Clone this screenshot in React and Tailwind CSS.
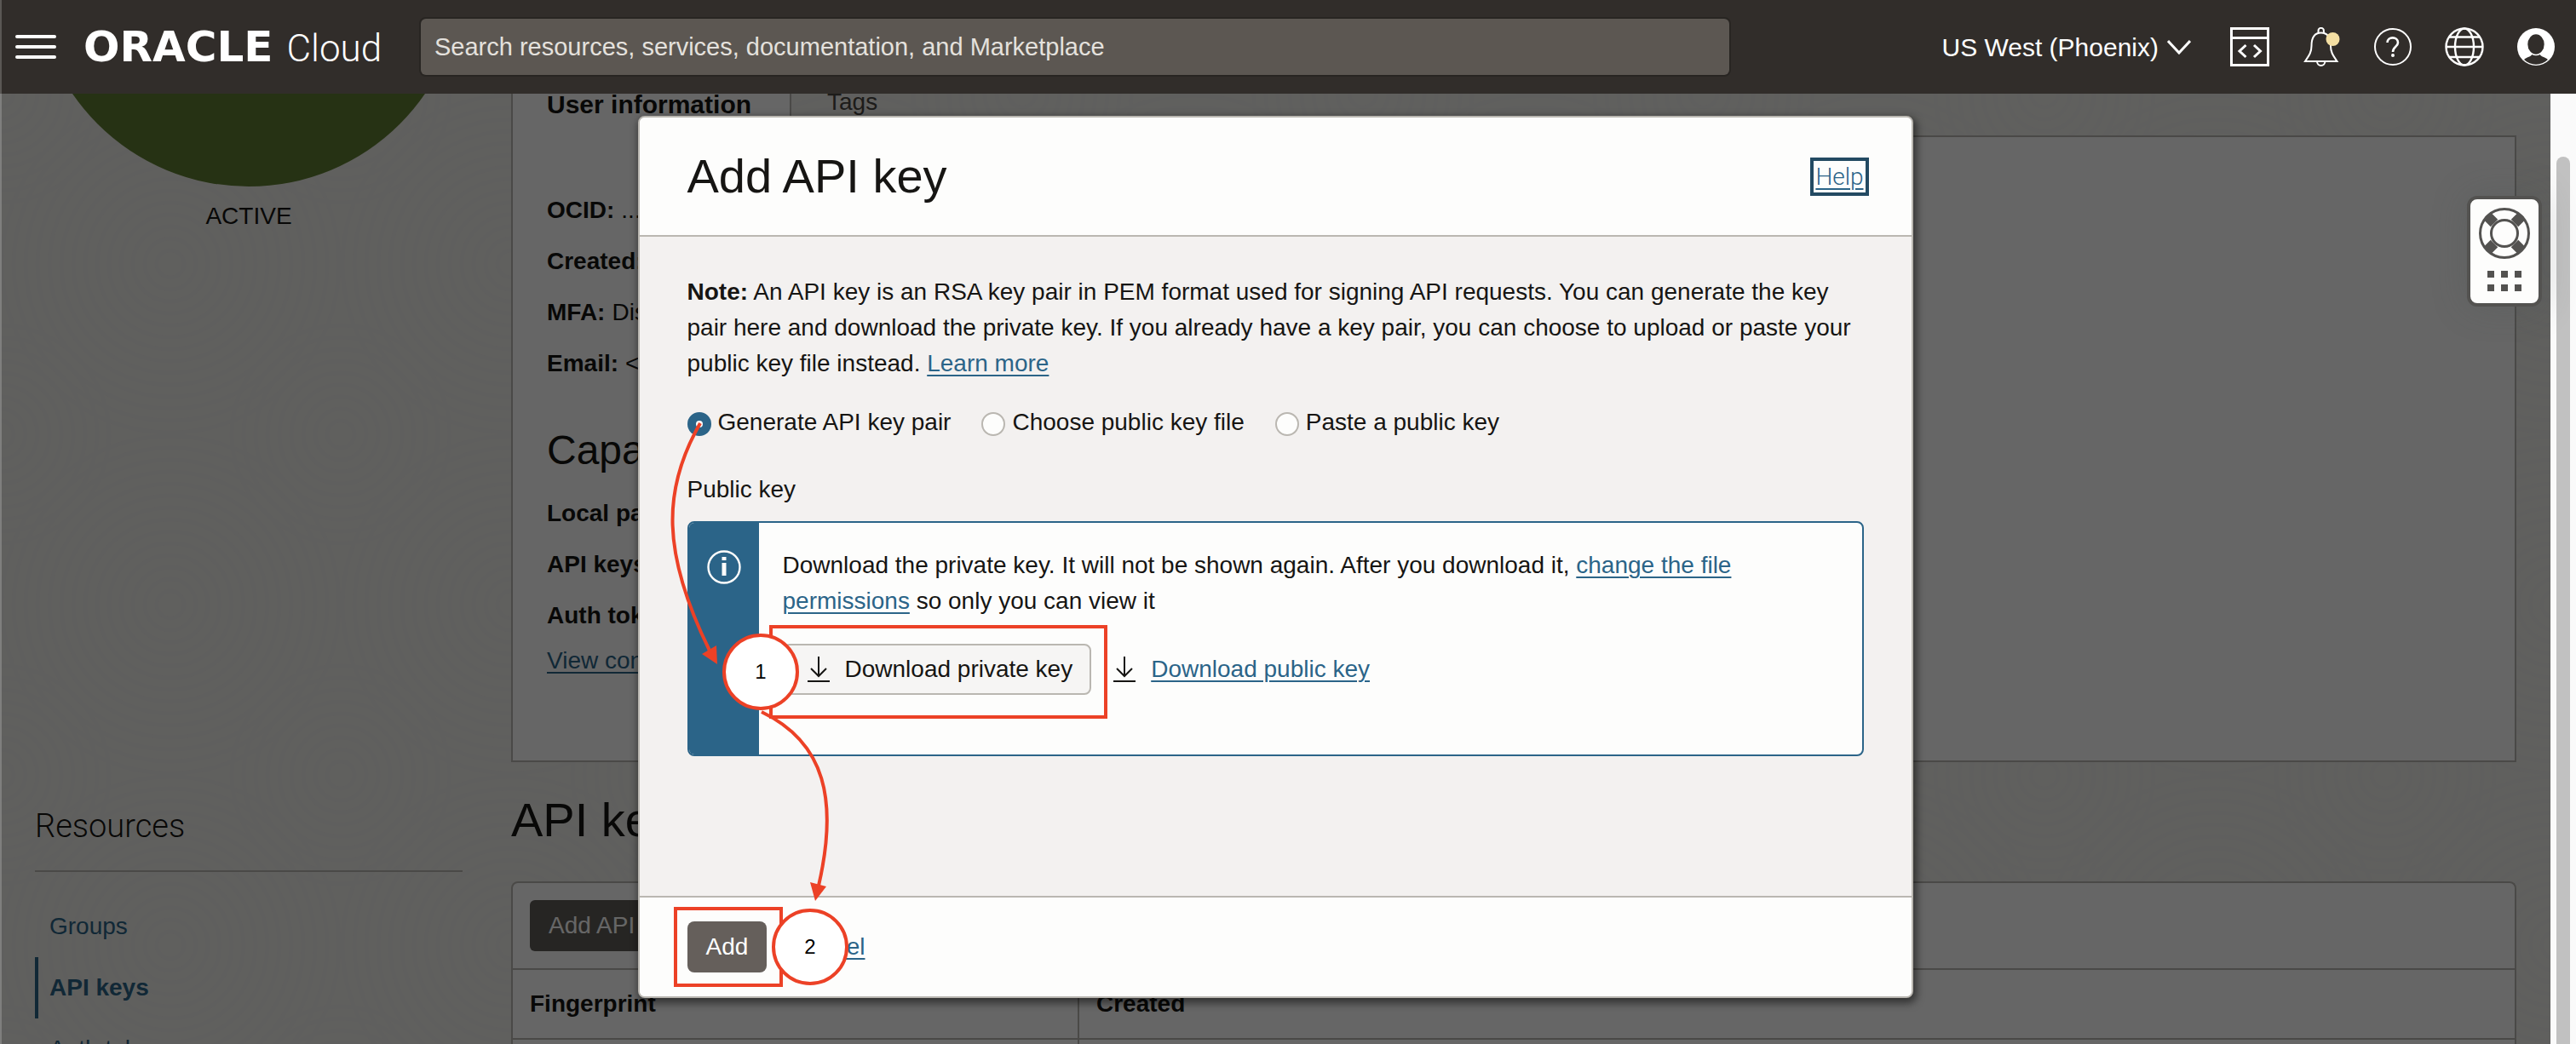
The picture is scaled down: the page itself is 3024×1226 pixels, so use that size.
import React from "react";

const LINK = "text-[#2b6488] underline decoration-2 underline-offset-4";

function Header() {
  return (
    <header className="relative z-30 flex h-[110px] shrink-0 items-center bg-[#312d2a] pr-6 pl-[18px] text-white">
      <button aria-label="Open navigation menu" className="flex w-12 shrink-0 flex-col gap-2">
        <span className="h-1 w-full rounded-full bg-white" />
        <span className="h-1 w-full rounded-full bg-white" />
        <span className="h-1 w-full rounded-full bg-white" />
      </button>
      <a href="#home" className="ml-8 flex w-[396px] shrink-0 items-baseline gap-4 leading-none">
        <span className="font-['DejaVu_Sans',sans-serif] text-[50px] font-bold">ORACLE</span>
        <span className="font-['Roboto',sans-serif] text-[44px] font-light">Cloud</span>
      </a>
      <input
        type="search"
        aria-label="Search"
        placeholder="Search resources, services, documentation, and Marketplace"
        className="h-[66px] w-[1536px] min-w-0 shrink rounded-md bg-[#5c5752] px-4 text-[29px] text-white placeholder-[#e4e1dd] shadow-[0_0_0_2px_#282522] outline-none"
      />
      <div className="ml-auto flex shrink-0 items-center">
        <button className="mr-[46px] flex items-center gap-[10px] text-[30px]">
          US West (Phoenix)
          <svg width="28" height="18" viewBox="0 0 28 18" fill="none" stroke="currentColor" strokeWidth="3">
            <path d="M1 2 L14 16 L27 2" />
          </svg>
        </button>
        <div className="flex items-center gap-[38px]">
          <button aria-label="Developer tools">
            <svg width="46" height="46" viewBox="0 0 46 46" fill="none" stroke="currentColor" strokeWidth="3">
              <rect x="1.5" y="1.5" width="43" height="43" />
              <path d="M1 12.5h44" />
              <path d="M18.5 21 L11 28 L18.5 35 M28 21 L35.500 28 L28 35" />
            </svg>
          </button>
          <button aria-label="Announcements">
            <svg width="46" height="46" viewBox="0 0 46 46" fill="none" stroke="currentColor" strokeWidth="2">
              <path d="M19.500 6.500 V4 a3.200 3.200 0 0 1 6.400 0 V6.500" />
              <path d="M4 40 C8 34 11.500 30 11.500 22 C11.500 12 15.500 6.500 22.700 6.500 C30 6.500 34 12 34 22 C34 30 37.500 34 41.500 40 Z" />
              <path d="M18 40 a4.700 5 0 0 0 9.400 0" />
              <circle cx="36.500" cy="14" r="8" fill="#f4dfa3" stroke="none" />
            </svg>
          </button>
          <button aria-label="Help">
            <svg width="46" height="46" viewBox="0 0 46 46" fill="none" stroke="currentColor" strokeWidth="2">
              <circle cx="23" cy="23" r="21" />
              <path d="M16.500 18 C16.500 10.500 29 10.500 29 18 C29 23 23 22.500 23 29" strokeWidth="2.600" />
              <circle cx="23" cy="33" r="2" fill="currentColor" stroke="none" />
            </svg>
          </button>
          <button aria-label="Language">
            <svg width="46" height="46" viewBox="0 0 46 46" fill="none" stroke="currentColor" strokeWidth="2.400">
              <circle cx="23" cy="23" r="21.500" />
              <ellipse cx="23" cy="23" rx="11" ry="21.500" />
              <path d="M1.500 23h43 M5 11.500h36 M5 35h36" />
            </svg>
          </button>
          <button aria-label="Profile">
            <svg width="46" height="46" viewBox="0 0 46 46">
              <circle cx="23" cy="23" r="22" fill="#ffffff" />
              <path d="M9 38 C13 34.500 17 35 18.500 31.500 H27.500 C29 35 33 34.500 37 38 C29 45.500 17 45.500 9 38 Z" fill="#312d2a" />
              <ellipse cx="23" cy="20" rx="10.500" ry="12.500" fill="#312d2a" stroke="#ffffff" strokeWidth="1.600" />
            </svg>
          </button>
        </div>
      </div>
    </header>
  );
}

const RINGS = [16, 30, 44, 58, 72, 86, 100, 114, 128, 142, 156, 170, 184, 198];

function Texture() {
  return (
    <svg className="absolute inset-0 h-full w-full" aria-hidden="true">
      <defs>
        <pattern id="rings" width="400" height="400" patternUnits="userSpaceOnUse">
          <g fill="none" stroke="#eeedea" strokeWidth="5">
            {RINGS.map((r) => (
              <circle key={r} cx="200" cy="200" r={r} />
            ))}
            {RINGS.slice(0, 9).map((r) => (
              <g key={r}>
                <circle cx="0" cy="0" r={r} />
                <circle cx="400" cy="0" r={r} />
                <circle cx="0" cy="400" r={r} />
                <circle cx="400" cy="400" r={r} />
              </g>
            ))}
          </g>
        </pattern>
      </defs>
      <rect width="100%" height="100%" fill="url(#rings)" />
    </svg>
  );
}

const NAV = [
  { label: "Groups", active: false },
  { label: "API keys", active: true },
  { label: "Auth tokens", active: false },
];

function Sidebar() {
  return (
    <aside className="w-[502px] shrink-0">
      <div className="-mt-[393px] aspect-square w-full rounded-full bg-[#5f7d32]" />
      <p className="mt-[14px] text-center leading-[42px]">ACTIVE</p>
      <h2 className="mt-[671px] font-['Roboto',sans-serif] text-[38px] leading-[48px] font-light">Resources</h2>
      <hr className="mt-7 border-t-2 border-[#bab7b1]" />
      <nav className="mt-7">
        {NAV.map((n) => (
          <a
            key={n.label}
            href="#resource"
            className={
              n.active
                ? "flex h-[72px] items-center border-l-4 border-[#2b6488] pl-[13px] font-bold text-[#2b6488]"
                : "flex h-[72px] items-center pl-[17px] text-[#2b6488]"
            }
          >
            {n.label}
          </a>
        ))}
      </nav>
    </aside>
  );
}

function Row({ name, value }) {
  return (
    <div className="flex h-[60px] items-center gap-2">
      <dt className="font-bold">{name}</dt>
      <dd>{value}</dd>
    </div>
  );
}

function Details() {
  return (
    <main className="mr-10 ml-[57px] min-w-0 flex-1">
      <div className="-mt-[26px] flex h-[75px] items-stretch">
        <button className="relative z-10 -mb-[2px] w-[329px] border-x-2 border-[#bab7b1] bg-white pl-10 text-left text-[30px] font-bold">
          User information
        </button>
        <button className="px-[42px] pb-[4px] text-[#4a4743]">Tags</button>
      </div>
      <section className="border-2 border-[#bab7b1] bg-white px-10 pt-14 pb-[94px]">
        <dl>
          <Row name="OCID:" value="..." />
          <Row name="Created:" value="" />
          <Row name="MFA:" value="Dis" />
          <Row name="Email:" value="<" />
        </dl>
        <h2 className="mt-[42px] mb-[14px] text-[48px] leading-[60px]">Capabilities</h2>
        <dl>
          <Row name="Local password:" value="" />
          <Row name="API keys:" value="" />
          <Row name="Auth tokens:" value="" />
        </dl>
        <a href="#config" className={`${LINK} block w-fit leading-[46px]`}>
          View configuration
        </a>
      </section>
      <h1 className="mt-9 mb-10 text-[56px] leading-[64px]">API keys</h1>
      <section className="rounded-t-lg border-2 border-b-0 border-[#bab7b1] bg-white">
        <div className="flex h-[100px] items-center px-5">
          <button className="h-[60px] rounded-md bg-[#5f5c58] px-[22px] text-white">Add API key</button>
        </div>
        <table className="w-full table-fixed border-collapse text-left">
          <thead>
            <tr className="h-[82px] border-y-2 border-[#bab7b1]">
              <th className="w-[664px] border-r-2 border-[#bab7b1] px-5 font-bold">Fingerprint</th>
              <th className="px-5 font-bold">Created</th>
            </tr>
          </thead>
          <tbody>
            <tr className="h-[80px]">
              <td className="border-r-2 border-[#bab7b1]" />
              <td />
            </tr>
          </tbody>
        </table>
      </section>
    </main>
  );
}

function DownloadIcon() {
  return (
    <svg width="26" height="32" viewBox="0 0 26 32" fill="none" stroke="currentColor" strokeWidth="2" className="shrink-0">
      <path d="M13 1v23 M4 15l9 9 9-9" />
      <path d="M0 30h26" />
    </svg>
  );
}

function Radio({ id, label, checked }) {
  return (
    <label htmlFor={id} className="flex items-center gap-2">
      <input
        id={id}
        type="radio"
        name="source"
        defaultChecked={checked}
        className="mt-1 size-7 shrink-0 appearance-none rounded-full border-2 border-[#bab7b1] bg-[#fdfdfc] checked:border-[10px] checked:border-[#2b6488]"
      />
      {label}
    </label>
  );
}

function Annotations() {
  return (
    <svg
      className="pointer-events-none absolute -top-[2px] -left-[2px] overflow-visible"
      width="400"
      height="1036"
      viewBox="749 136 400 1036"
      fill="none"
      stroke="#ec4126"
      strokeWidth="4"
    >
      <rect x="905" y="736" width="393" height="106" />
      <rect x="793" y="1067" width="124" height="90" />
      <path d="M822 497 C777 575 777 650 833 764" />
      <path d="M842 780 L824 768 L841 758 Z" fill="#ec4126" stroke="none" />
      <path d="M894 836 C969 872 984 940 961 1040" />
      <path d="M957 1058 L951 1036 L970 1041 Z" fill="#ec4126" stroke="none" />
      <circle cx="893" cy="789" r="43" fill="#ffffff" />
      <circle cx="951" cy="1112" r="43" fill="#ffffff" />
      <g fill="#000000" stroke="none" fontSize="24" textAnchor="middle">
        <text x="893" y="797">1</text>
        <text x="951" y="1120">2</text>
      </g>
    </svg>
  );
}

function Modal() {
  return (
    <div
      role="dialog"
      aria-labelledby="modal-title"
      className="relative w-1/2 rounded-lg border-2 border-[#bab7b1] bg-[#f3f1f0] shadow-[2px_4px_10px_2px_rgba(0,0,0,0.5)]"
    >
      <div className="flex h-[140px] items-center justify-between rounded-t-md border-b-2 border-[#bab7b1] bg-[#fdfdfc] pr-[50px] pl-[56px]">
        <h2 id="modal-title" className="text-[56px] leading-[64px]">
          Add API key
        </h2>
        <a
          href="#help"
          className="border-4 border-[#234a62] px-[2px] font-['Roboto',sans-serif] leading-[37px] font-light text-[#2b6488] underline decoration-2 underline-offset-4"
        >
          Help
        </a>
      </div>
      <div className="pt-[44px] pr-[56px] pb-[164px] pl-[56px]">
        <p className="leading-[42px]">
          <strong>Note:</strong> An API key is an RSA key pair in PEM format used for signing API requests. You can
          generate the key pair here and download the private key. If you already have a key pair, you can choose to
          upload or paste your public key file instead.{" "}
          <a href="#learn" className={LINK}>
            Learn more
          </a>
        </p>
        <div className="mt-[27px] flex gap-9 leading-[42px]">
          <Radio id="generate" label="Generate API key pair" checked />
          <Radio id="choose" label="Choose public key file" />
          <Radio id="paste" label="Paste a public key" />
        </div>
        <p className="mt-[37px] leading-[42px]">Public key</p>
        <div className="mt-[16px] flex h-[276px] overflow-hidden rounded-lg border-2 border-[#2b6488] bg-[#fdfdfc]">
          <div className="flex w-[82px] shrink-0 justify-center bg-[#2b6488] pt-8">
            <svg width="40" height="40" viewBox="0 0 40 40" fill="none">
              <circle cx="20" cy="20" r="18.500" stroke="#fdfdfc" strokeWidth="2.400" />
              <path d="M17.500 8h5v4h-5z M17.500 15h5v15h-5z" fill="#fdfdfc" />
            </svg>
          </div>
          <div className="min-w-0 flex-1 px-7 pt-[29px]">
            <p className="max-w-[1160px] leading-[42px]">
              Download the private key. It will not be shown again. After you download it,{" "}
              <a href="#permissions" className={LINK}>
                change the file permissions
              </a>{" "}
              so only you can view it
            </p>
            <div className="mt-[29px] flex items-center gap-[26px]">
              <button className="flex h-[60px] items-center gap-[18px] rounded-lg border-2 border-[#bab7b1] bg-[#f6f5f4] pr-5 pl-[27px]">
                <DownloadIcon />
                Download private key
              </button>
              <a href="#public" className="flex items-center gap-[18px]">
                <DownloadIcon />
                <span className={LINK}>Download public key</span>
              </a>
            </div>
          </div>
        </div>
      </div>
      <div className="flex h-[118px] items-center gap-7 rounded-b-md border-t-2 border-[#bab7b1] bg-[#fdfdfc] pl-[56px]">
        <button className="h-[60px] rounded-lg bg-[#655f5b] px-[22px] text-white">Add</button>
        <a href="#cancel" className={LINK}>
          Cancel
        </a>
      </div>
      <Annotations />
    </div>
  );
}

function SupportWidget() {
  return (
    <button
      aria-label="Support"
      className="absolute top-[120px] right-10 z-20 flex w-[88px] flex-col items-center gap-[14px] rounded-xl border-4 border-[#535250] bg-[#fdfdfc] pt-[10px] pb-[14px] shadow-[0_0_40px_rgba(70,80,80,0.25)]"
    >
      <svg width="60" height="60" viewBox="0 0 60 60" fill="none" stroke="#535250">
        <g strokeWidth="12">
          <path d="M18 18 L10 10 M42 18 L50 10 M18 42 L10 50 M42 42 L50 50" />
        </g>
        <circle cx="30" cy="30" r="28.500" strokeWidth="3" />
        <circle cx="30" cy="30" r="15.500" strokeWidth="3" fill="#fdfdfc" />
      </svg>
      <svg width="40" height="24" viewBox="0 0 40 24" fill="#535250">
        <path d="M0 0h8v8h-8z M16 0h8v8h-8z M32 0h8v8h-8z M0 16h8v8h-8z M16 16h8v8h-8z M32 16h8v8h-8z" />
      </svg>
    </button>
  );
}

export default function App() {
  return (
    <div className="relative flex h-screen flex-col overflow-hidden bg-[#f1efeb] font-['Liberation_Sans',Arial,sans-serif] text-[28px] text-[#161513]">
      <Header />
      <div className="relative flex min-h-0 flex-1">
        <div className="relative min-w-0 flex-1 overflow-hidden">
          <Texture />
          <div className="relative flex pl-[41px]">
            <Sidebar />
            <Details />
          </div>
          <div className="absolute inset-0 z-20 flex items-start justify-center bg-black/60 pt-[26px]">
            <Modal />
          </div>
        </div>
        <div className="flex w-[30px] shrink-0 flex-col items-center bg-[#fafafa] pt-[74px]">
          <div className="w-4 flex-1 rounded-t-full bg-[#c1c1c1]" />
        </div>
        <SupportWidget />
      </div>
      <div className="absolute inset-y-0 left-0 z-40 w-[2px] bg-white/20" />
    </div>
  );
}
